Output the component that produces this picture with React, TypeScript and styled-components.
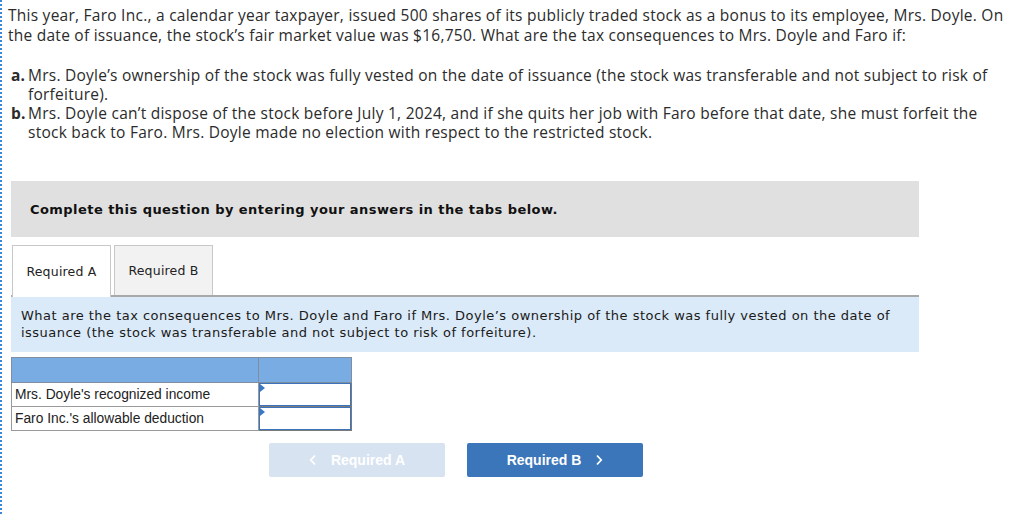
import React from 'react'
import styled, { createGlobalStyle } from 'styled-components'

const GlobalStyle = createGlobalStyle`
  html, body {
    margin: 0;
    padding: 0;
    background: #fff;
  }
`

const Page = styled.div`
  min-height: 514px;
  box-sizing: border-box;
  border-left: 2px dotted #3d86d6;
  padding: 5px 12px 0 6px;
  font-family: 'Open Sans', Lato, sans-serif;
  color: #2b2b2b;
`

const Intro = styled.p`
  margin: 0;
  font-size: 15.5px;
  letter-spacing: 0.25px;
  line-height: 20px;
`

const Parts = styled.ol`
  list-style: none;
  margin: 21px 0 0;
  padding: 0;
  font-size: 15.5px;
  letter-spacing: 0.25px;
  line-height: 19px;
`

const Part = styled.li`
  display: flex;
  padding-left: 3px;
`

const PartLetter = styled.b`
  width: 17px;
  flex: none;
  font-weight: 700;
`

const Workspace = styled.div`
  margin: 39px 0 0 3px;
  width: 908px;
`

const Instruction = styled.div`
  background: #e0e0e0;
  height: 56px;
  display: flex;
  align-items: center;
  padding-left: 19px;
  font-family: Verdana, 'DejaVu Sans', sans-serif;
  font-weight: 700;
  font-size: 13px;
  letter-spacing: 0.45px;
  color: #111;
`

const Tabs = styled.div`
  display: flex;
  gap: 3px;
  margin-top: 8px;
  padding-left: 1px;
  border-bottom: 2px solid #a9a9a9;
`

const Tab = styled.div<{ $active?: boolean }>`
  width: 99px;
  box-sizing: border-box;
  border: 1px solid #c8c8c8;
  border-bottom: none;
  background: ${(p) => (p.$active ? '#fff' : '#f2f2f2')};
  margin-bottom: ${(p) => (p.$active ? '-2px' : '0')};
  height: ${(p) => (p.$active ? '52px' : '50px')};
  display: flex;
  align-items: center;
  justify-content: center;
  font-family: Verdana, 'DejaVu Sans', sans-serif;
  font-size: 12.5px;
  letter-spacing: 0.2px;
  color: #222;
`

const Prompt = styled.div`
  background: #dbeaf8;
  padding: 10px 10px 11px;
  font-family: Verdana, 'DejaVu Sans', sans-serif;
  font-size: 13px;
  line-height: 17px;
  letter-spacing: 0.48px;
  color: #1a1a1a;
`

const Grid = styled.table`
  margin-top: 5px;
  border-collapse: collapse;
  font-family: 'Liberation Sans', Arial, sans-serif;
  font-size: 13.8px;
  color: #222;
`

const HeadCell = styled.th<{ $w: number }>`
  width: ${(p) => p.$w}px;
  height: 24px;
  padding: 0;
  background: #7aace4;
  border: 1px solid #7f8fa0;
`

const LabelCell = styled.td`
  height: 23px;
  padding: 0 3px;
  border: 1px solid #9a9a9a;
  white-space: nowrap;
`

const InputCell = styled.td`
  padding: 0;
  border: 1px solid #7a7a7a;
  position: relative;
`

const AnswerBox = styled.div`
  height: 21px;
  margin: 0;
  border: 1.5px solid #3b74bd;
  background: #fff;
`

const Marker = styled.span`
  position: absolute;
  left: 1px;
  top: 1px;
  width: 0;
  height: 0;
  border-top: 4px solid transparent;
  border-bottom: 4px solid transparent;
  border-left: 5px solid #3a78c6;
`

const Nav = styled.div`
  display: flex;
  gap: 22px;
  margin: 12px 0 0 258px;
`

const NavButton = styled.div<{ $disabled?: boolean }>`
  width: 176px;
  height: 34px;
  border-radius: 2px;
  background: ${(p) => (p.$disabled ? '#d7e3f1' : '#3a76b9')};
  color: #fff;
  display: flex;
  align-items: center;
  justify-content: center;
  gap: 14px;
  font-family: 'Liberation Sans', Arial, sans-serif;
  font-weight: 700;
  font-size: 14px;
`

const Chevron = ({ dir }: { dir: 'left' | 'right' }) => (
  <svg width="8" height="12" viewBox="0 0 8 12" fill="none">
    <path
      d={dir === 'left' ? 'M6 1.5L1.8 6L6 10.5' : 'M2 1.5L6.2 6L2 10.5'}
      stroke="#fff"
      strokeWidth="1.8"
    />
  </svg>
)

export default function App() {
  return (
    <>
      <GlobalStyle />
      <Page>
        <Intro>
          This year, Faro Inc., a calendar year taxpayer, issued 500 shares of its publicly traded stock as a bonus to its
          employee, Mrs. Doyle. On the date of issuance, the stock’s fair market value was $16,750. What are the tax
          consequences to Mrs. Doyle and Faro if:
        </Intro>
        <Parts>
          <Part>
            <PartLetter>a.</PartLetter>
            <span>
              Mrs. Doyle’s ownership of the stock was fully vested on the date of issuance (the stock was transferable and
              not subject to risk of forfeiture).
            </span>
          </Part>
          <Part>
            <PartLetter>b.</PartLetter>
            <span>
              Mrs. Doyle can’t dispose of the stock before July 1, 2024, and if she quits her job with Faro before that
              date, she must forfeit the stock back to Faro. Mrs. Doyle made no election with respect to the restricted
              stock.
            </span>
          </Part>
        </Parts>

        <Workspace>
          <Instruction>Complete this question by entering your answers in the tabs below.</Instruction>
          <Tabs>
            <Tab $active>Required A</Tab>
            <Tab>Required B</Tab>
          </Tabs>
          <Prompt>
            What are the tax consequences to Mrs. Doyle and Faro if Mrs. Doyle’s ownership of the stock was fully vested
            on the date of issuance (the stock was transferable and not subject to risk of forfeiture).
          </Prompt>
          <Grid>
            <thead>
              <tr>
                <HeadCell $w={246} />
                <HeadCell $w={92} />
              </tr>
            </thead>
            <tbody>
              <tr>
                <LabelCell>Mrs. Doyle's recognized income</LabelCell>
                <InputCell>
                  <AnswerBox />
                  <Marker />
                </InputCell>
              </tr>
              <tr>
                <LabelCell>Faro Inc.'s allowable deduction</LabelCell>
                <InputCell>
                  <AnswerBox />
                  <Marker />
                </InputCell>
              </tr>
            </tbody>
          </Grid>
          <Nav>
            <NavButton $disabled>
              <Chevron dir="left" />
              Required A
            </NavButton>
            <NavButton>
              Required B
              <Chevron dir="right" />
            </NavButton>
          </Nav>
        </Workspace>
      </Page>
    </>
  )
}
